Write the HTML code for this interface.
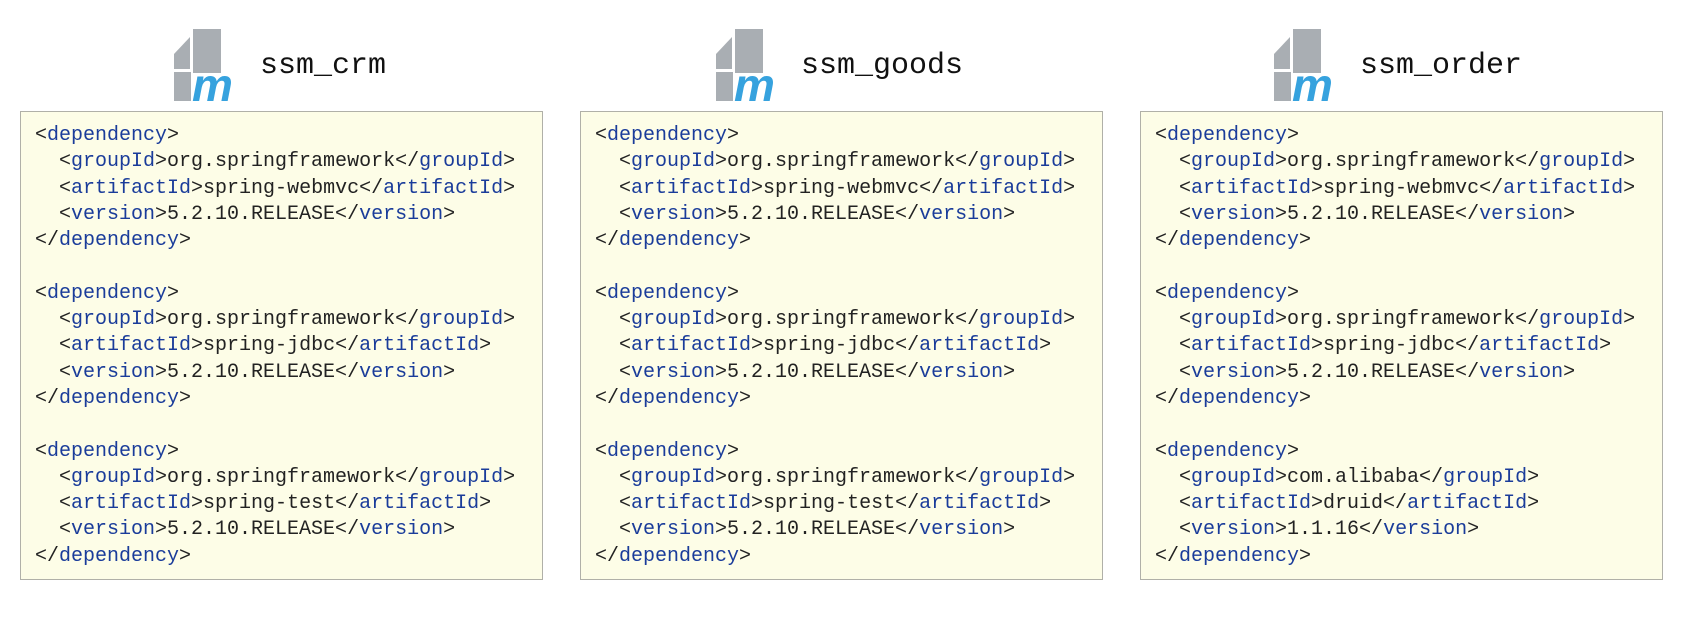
<!DOCTYPE html>
<html><head><meta charset="utf-8"><style>
html,body{margin:0;padding:0;background:#fff;width:1686px;height:628px;overflow:hidden;position:relative}
.box{position:absolute;top:111px;height:469px;width:523px;box-sizing:border-box;border:1px solid #b0b0a8;background:#fdfde7;}
pre{margin:0;position:absolute;left:14px;top:11px;font-family:"Liberation Mono",monospace;font-size:20px;line-height:26.3px;color:#222;}
.t{color:#1a3c9a}
.title{position:absolute;top:49px;font-family:"Liberation Mono",monospace;font-size:30px;color:#111;}
.icon{position:absolute;top:29px;width:64px;height:72px}
</style></head><body>
<svg class="icon" style="left:174px" viewBox="0 0 64 72"><g fill="#a9aeb3"><path d="M19 0H47V44H19Z"/><path d="M0 25L16 8V40H0Z"/><path d="M0 43H17V72H0Z"/></g><text x="18" y="72" font-family="Liberation Sans,sans-serif" font-style="italic" font-weight="bold" font-size="46" fill="#36a2de">m</text></svg>
<div class="title" style="left:260px">ssm_crm</div>
<svg class="icon" style="left:716px" viewBox="0 0 64 72"><g fill="#a9aeb3"><path d="M19 0H47V44H19Z"/><path d="M0 25L16 8V40H0Z"/><path d="M0 43H17V72H0Z"/></g><text x="18" y="72" font-family="Liberation Sans,sans-serif" font-style="italic" font-weight="bold" font-size="46" fill="#36a2de">m</text></svg>
<div class="title" style="left:801px">ssm_goods</div>
<svg class="icon" style="left:1274px" viewBox="0 0 64 72"><g fill="#a9aeb3"><path d="M19 0H47V44H19Z"/><path d="M0 25L16 8V40H0Z"/><path d="M0 43H17V72H0Z"/></g><text x="18" y="72" font-family="Liberation Sans,sans-serif" font-style="italic" font-weight="bold" font-size="46" fill="#36a2de">m</text></svg>
<div class="title" style="left:1360px">ssm_order</div>

<div class="box" style="left:20px"><pre>&lt;<span class="t">dependency</span>&gt;
  &lt;<span class="t">groupId</span>&gt;org.springframework&lt;/<span class="t">groupId</span>&gt;
  &lt;<span class="t">artifactId</span>&gt;spring-webmvc&lt;/<span class="t">artifactId</span>&gt;
  &lt;<span class="t">version</span>&gt;5.2.10.RELEASE&lt;/<span class="t">version</span>&gt;
&lt;/<span class="t">dependency</span>&gt;

&lt;<span class="t">dependency</span>&gt;
  &lt;<span class="t">groupId</span>&gt;org.springframework&lt;/<span class="t">groupId</span>&gt;
  &lt;<span class="t">artifactId</span>&gt;spring-jdbc&lt;/<span class="t">artifactId</span>&gt;
  &lt;<span class="t">version</span>&gt;5.2.10.RELEASE&lt;/<span class="t">version</span>&gt;
&lt;/<span class="t">dependency</span>&gt;

&lt;<span class="t">dependency</span>&gt;
  &lt;<span class="t">groupId</span>&gt;org.springframework&lt;/<span class="t">groupId</span>&gt;
  &lt;<span class="t">artifactId</span>&gt;spring-test&lt;/<span class="t">artifactId</span>&gt;
  &lt;<span class="t">version</span>&gt;5.2.10.RELEASE&lt;/<span class="t">version</span>&gt;
&lt;/<span class="t">dependency</span>&gt;</pre></div>

<div class="box" style="left:580px"><pre>&lt;<span class="t">dependency</span>&gt;
  &lt;<span class="t">groupId</span>&gt;org.springframework&lt;/<span class="t">groupId</span>&gt;
  &lt;<span class="t">artifactId</span>&gt;spring-webmvc&lt;/<span class="t">artifactId</span>&gt;
  &lt;<span class="t">version</span>&gt;5.2.10.RELEASE&lt;/<span class="t">version</span>&gt;
&lt;/<span class="t">dependency</span>&gt;

&lt;<span class="t">dependency</span>&gt;
  &lt;<span class="t">groupId</span>&gt;org.springframework&lt;/<span class="t">groupId</span>&gt;
  &lt;<span class="t">artifactId</span>&gt;spring-jdbc&lt;/<span class="t">artifactId</span>&gt;
  &lt;<span class="t">version</span>&gt;5.2.10.RELEASE&lt;/<span class="t">version</span>&gt;
&lt;/<span class="t">dependency</span>&gt;

&lt;<span class="t">dependency</span>&gt;
  &lt;<span class="t">groupId</span>&gt;org.springframework&lt;/<span class="t">groupId</span>&gt;
  &lt;<span class="t">artifactId</span>&gt;spring-test&lt;/<span class="t">artifactId</span>&gt;
  &lt;<span class="t">version</span>&gt;5.2.10.RELEASE&lt;/<span class="t">version</span>&gt;
&lt;/<span class="t">dependency</span>&gt;</pre></div>

<div class="box" style="left:1140px"><pre>&lt;<span class="t">dependency</span>&gt;
  &lt;<span class="t">groupId</span>&gt;org.springframework&lt;/<span class="t">groupId</span>&gt;
  &lt;<span class="t">artifactId</span>&gt;spring-webmvc&lt;/<span class="t">artifactId</span>&gt;
  &lt;<span class="t">version</span>&gt;5.2.10.RELEASE&lt;/<span class="t">version</span>&gt;
&lt;/<span class="t">dependency</span>&gt;

&lt;<span class="t">dependency</span>&gt;
  &lt;<span class="t">groupId</span>&gt;org.springframework&lt;/<span class="t">groupId</span>&gt;
  &lt;<span class="t">artifactId</span>&gt;spring-jdbc&lt;/<span class="t">artifactId</span>&gt;
  &lt;<span class="t">version</span>&gt;5.2.10.RELEASE&lt;/<span class="t">version</span>&gt;
&lt;/<span class="t">dependency</span>&gt;

&lt;<span class="t">dependency</span>&gt;
  &lt;<span class="t">groupId</span>&gt;com.alibaba&lt;/<span class="t">groupId</span>&gt;
  &lt;<span class="t">artifactId</span>&gt;druid&lt;/<span class="t">artifactId</span>&gt;
  &lt;<span class="t">version</span>&gt;1.1.16&lt;/<span class="t">version</span>&gt;
&lt;/<span class="t">dependency</span>&gt;</pre></div>
</body></html>
